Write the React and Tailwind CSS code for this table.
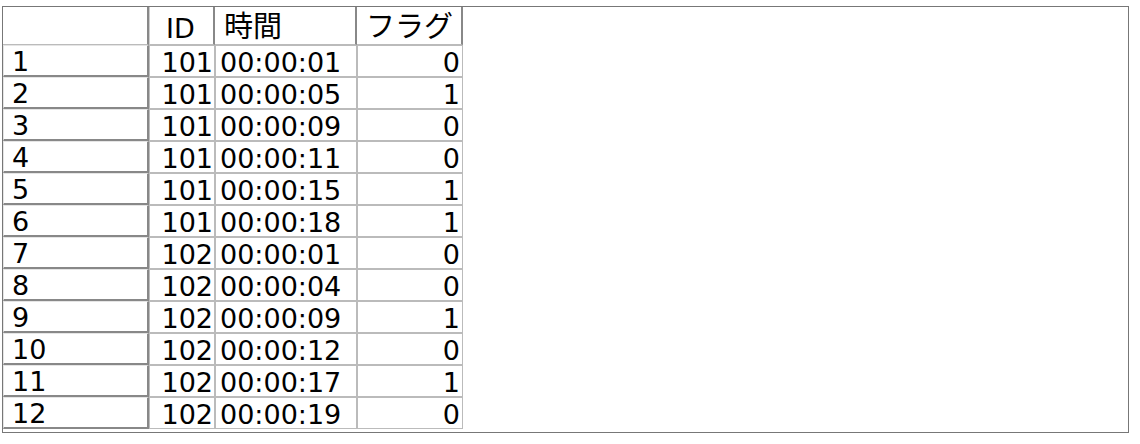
import React from 'react';

const rows = [
  [1, 101, '00:00:01', 0],
  [2, 101, '00:00:05', 1],
  [3, 101, '00:00:09', 0],
  [4, 101, '00:00:11', 0],
  [5, 101, '00:00:15', 1],
  [6, 101, '00:00:18', 1],
  [7, 102, '00:00:01', 0],
  [8, 102, '00:00:04', 0],
  [9, 102, '00:00:09', 1],
  [10, 102, '00:00:12', 0],
  [11, 102, '00:00:17', 1],
  [12, 102, '00:00:19', 0],
];

const font = { fontFamily: '"DejaVu Sans", "Noto Sans CJK JP", sans-serif' };

export default function App() {
  return (
    <div className="bg-white w-[1140px] h-[444px] pt-[6px] pl-[2px]">
      <div className="w-[1127px] h-[427px] border border-[#777]">
        <table
          className="border-separate border-spacing-0 text-[27px] leading-none text-black"
          style={font}
        >
          <thead>
            <tr className="h-[38px]">
              <th className="w-[146px] border-r-2 border-b border-r-[#888] border-b-[#bbb] p-0" />
              <th className="w-[66px] border-r-2 border-b border-l border-r-[#888] border-b-[#bbb] border-l-[#ccc] pl-[16px] pr-[2px] text-left font-normal align-bottom pb-[2px]">ID</th>
              <th className="w-[142px] border-r-2 border-b border-r-[#888] border-b-[#bbb] pl-[9px] pr-[4px] text-left font-normal align-bottom pb-[2px] text-[29px]">時間</th>
              <th className="w-[106px] border-r-2 border-b border-r-[#888] border-b-[#bbb] pl-[9px] pr-[2px] text-left font-normal align-bottom pb-[2px] text-[29px]">フラグ</th>
            </tr>
          </thead>
          <tbody>
            {rows.map(([n, id, t, f]) => (
              <tr key={n} className="h-[32px]">
                <td className="border-t border-l border-t-[#e5e5e5] border-l-[#e5e5e5] border-r-2 border-b-2 border-r-[#888] border-b-[#888] pl-[8px] align-bottom">
                  {n}
                </td>
                <td className="border border-[#bbb] px-[1px] text-right align-bottom">{id}</td>
                <td className="border border-[#bbb] px-[4px] text-left align-bottom">{t}</td>
                <td className="border border-[#bbb] px-[2px] text-right align-bottom">{f}</td>
              </tr>
            ))}
          </tbody>
        </table>
      </div>
    </div>
  );
}
